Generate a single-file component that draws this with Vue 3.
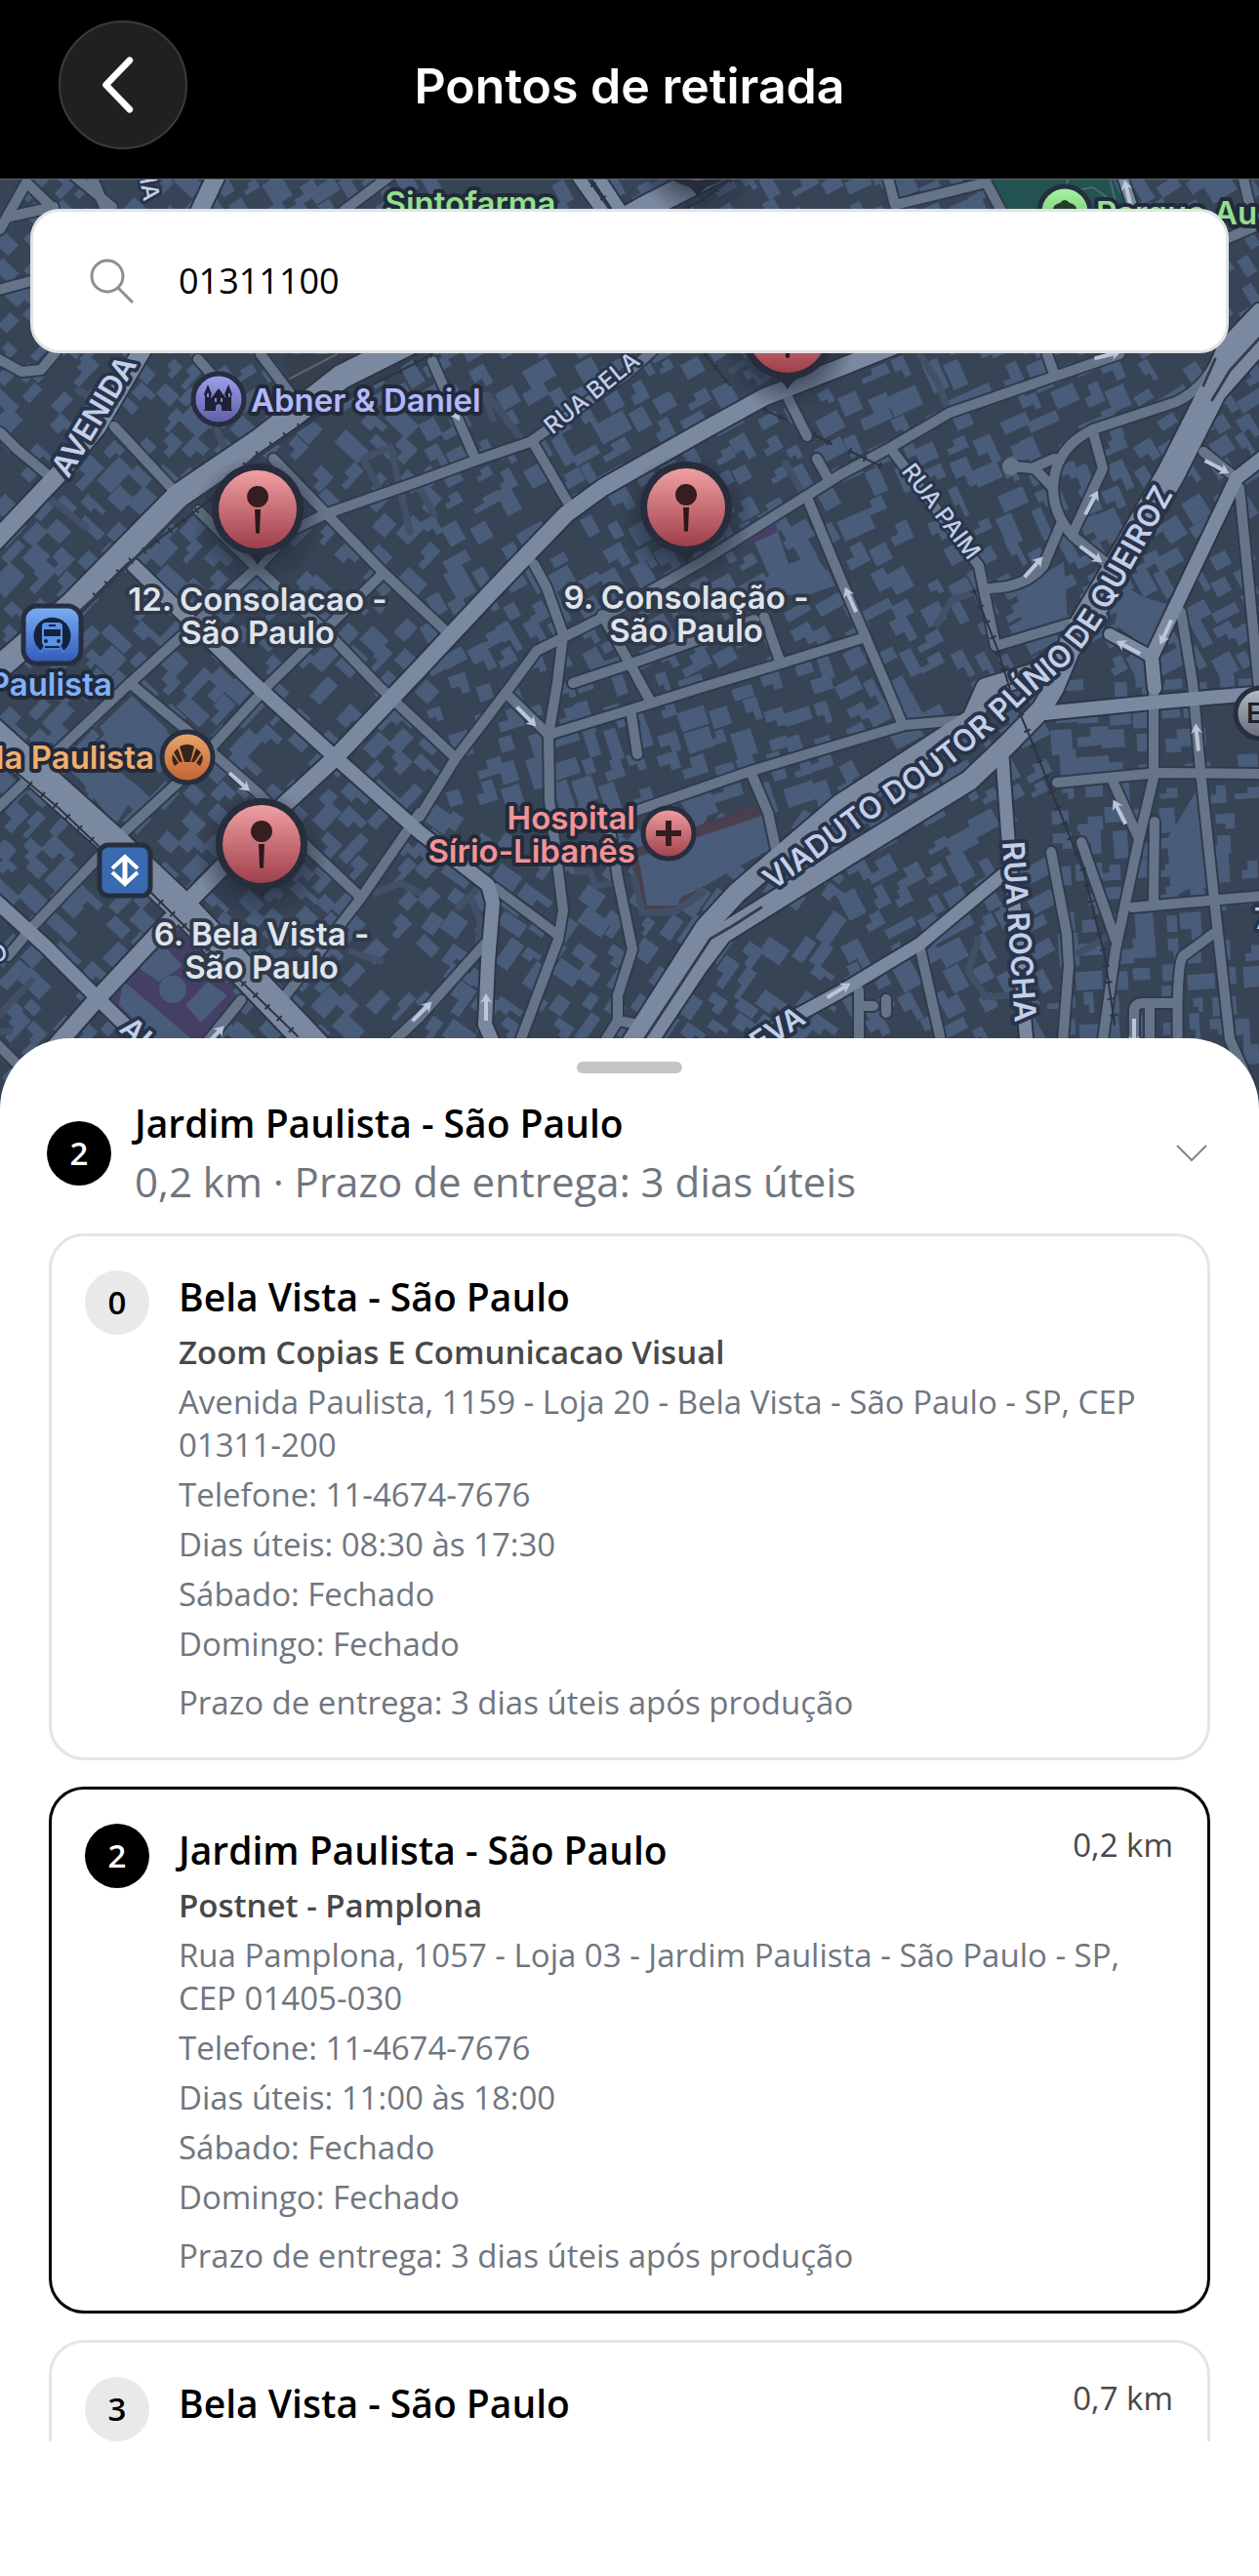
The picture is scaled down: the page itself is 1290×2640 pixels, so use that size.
<template>
  <main class="screen">
    <header class="topbar">
      <button class="back" type="button" aria-label="Voltar">
        <svg viewBox="0 0 132 132" aria-hidden="true">
          <path d="M73 40 L48 66 L73 92" />
        </svg>
      </button>
      <h1 class="topbar-title">Pontos de retirada</h1>
    </header>

    <section class="map" aria-label="Mapa">
      <svg class="map-canvas" viewBox="0 183 1290 960" preserveAspectRatio="xMidYMin slice">
        <defs>
          <linearGradient id="red" x1="0" y1="0" x2="0" y2="1">
            <stop offset="0" stop-color="#f0a0a2" />
            <stop offset="1" stop-color="#9f3f4b" />
          </linearGradient>
          <linearGradient id="violet" x1="0" y1="0" x2="0" y2="1">
            <stop offset="0" stop-color="#9ea3ea" />
            <stop offset="1" stop-color="#5d5ba6" />
          </linearGradient>
          <linearGradient id="orange" x1="0" y1="0" x2="0" y2="1">
            <stop offset="0" stop-color="#eaa76c" />
            <stop offset="1" stop-color="#c26030" />
          </linearGradient>
          <linearGradient id="blue" x1="0" y1="0" x2="0" y2="1">
            <stop offset="0" stop-color="#79b0f8" />
            <stop offset="1" stop-color="#3158b8" />
          </linearGradient>
          <linearGradient id="green" x1="0" y1="0" x2="0" y2="1">
            <stop offset="0" stop-color="#a9f5a4" />
            <stop offset="1" stop-color="#63b868" />
          </linearGradient>
          <linearGradient id="gray" x1="0" y1="0" x2="0" y2="1">
            <stop offset="0" stop-color="#b4bcc6" />
            <stop offset="1" stop-color="#646b76" />
          </linearGradient>
          <radialGradient id="glow">
            <stop offset="0.500" stop-color="#1f2635" stop-opacity="0.600" />
            <stop offset="1" stop-color="#1f2635" stop-opacity="0" />
          </radialGradient>
          <path id="viaduto" d="M792 913 L880 849 L960 795 Q1010 758 1057 711 Q1105 677 1131 633 L1230 457" />
        </defs>

        <rect y="183" width="1290" height="960" fill="#374455" />
        <path :d="buildings" class="building" />
        <path d="M290 363H430L400 384 330 428 300 400Z" fill="#363f4b" />
        <path d="M345 363 297 388" class="trail" />
        <path d="M1015 183H1140L1156 216H1030Z" fill="#225350" />
        <path d="M1090 195 1095 183M1102 195 1120 192 1134 202M1137 183 1144 210" class="trail" />
        <path d="M110 1025 187 948 245 1024 205 1068H148Z" fill="#453f66" />
        <path d="M126 1005 200 1068H160L122 1030ZM142 992 167 968 187 990 163 1006ZM190 1030 213 1006 233 1020 206 1048Z" class="building" />
        <circle cx="177" cy="1014" r="14" class="building" />
        <path d="M768 550 795 537 797 546 773 556ZM840 568 848 572 862 600 858 604Z" fill="#453f66" />
        <path d="M644 872 776 824 778 834 794 866 716 912 694 930 660 934Z" fill="#49404f" />
        <path d="M654 878 775 838 784 834 794 868 714 912 697 920 695 928 663 928Z" class="building" />
        <path d="M697 822 728 812 736 832 710 842ZM1040 605 1090 576 1094 638 1052 646Z" class="building" />
        <path d="M773 556 797 545 808 578 835 568 856 600 822 612 796 608Z" class="building" />
        <path d="M102 745 135 713 172 748 135 792ZM78 794 100 770 142 808 118 846Z" class="building" />
        <path d="M1150 600 1172 612 1212 624 1176 664 1142 640ZM1196 860 1232 800 1240 900 1200 920Z" class="building" />

        <path v-for="d in lanes" :key="d" :d="d" class="lane" />
        <path v-for="d in streets" :key="'c' + d" :d="d" class="street-case" />
        <path v-for="r in avenues" :key="'c' + r.d" :d="r.d" class="avenue-case" :stroke-width="r.w + 4" />
        <path v-for="d in streets" :key="d" :d="d" class="street" />
        <circle cx="1036" cy="478" r="9" fill="#667489" />
        <path v-for="r in avenues" :key="r.d" :d="r.d" class="avenue" :stroke-width="r.w" />
        <path v-for="d in rails" :key="d" :d="d" class="rail" />
        <path v-for="d in rails" :key="'t' + d" :d="d" class="rail-ties" />
        <path v-for="d in medians" :key="d" :d="d" class="median" />

        <g v-for="(a, i) in arrows" :key="i" class="arrow" :transform="arrowTransform(a)">
          <path d="M-14 -2H6L4 -6L14 0 4 6 6 2H-14Z" />
        </g>

        <!-- nomes de ruas -->
        <g class="road-name">
          <text class="road-big"><textPath href="#viaduto">VIADUTO DOUTOR PLÍNIO DE QUEIROZ</textPath></text>
          <text class="road-big" transform="translate(70 491) rotate(-59)">AVENIDA</text>
          <text class="road-big" transform="translate(1027 863) rotate(86)">RUA ROCHA</text>
          <text class="road-mid" transform="translate(777 1080) rotate(-33)">EVA</text>
          <text class="road-mid" transform="translate(121 1056) rotate(42)">AL</text>
          <text class="road-small" transform="translate(566 446) rotate(-39)">RUA BELA</text>
          <text class="road-small" transform="translate(923 483) rotate(53)">RUA PAIM</text>
          <text class="road-small" transform="translate(140 166) rotate(80)">HIA</text>
          <text class="road-small" transform="translate(-8 988) rotate(-20)">O</text>
          <text class="road-mid" x="1285" y="952">7</text>
        </g>

        <!-- pontos de interesse -->
        <g class="poi">
          <text x="482" y="220" text-anchor="middle" fill="#92df8d">Sintofarma</text>
          <text x="1123" y="230" fill="#92df8d">Parque Augusta</text>
          <text x="257" y="422" fill="#b3b8fb">Abner &amp; Daniel</text>
          <text x="115" y="713" text-anchor="end" fill="#7fb1fa">Paulista</text>
          <text x="158" y="788" text-anchor="end" fill="#f0ae70">la Paulista</text>
          <text x="651" y="850" text-anchor="end" fill="#f19396">Hospital</text>
          <text x="651" y="884" text-anchor="end" fill="#f19396">Sírio-Libanês</text>
        </g>

        <g class="badge-ring">
          <circle cx="1091" cy="217" r="26" fill="url(#green)" />
          <circle cx="224" cy="409" r="26" fill="url(#violet)" />
          <circle cx="192" cy="776" r="26" fill="url(#orange)" />
          <circle cx="685" cy="854" r="26" fill="url(#red)" />
          <circle cx="1292" cy="731" r="26" fill="url(#gray)" />
          <rect x="24" y="621" width="59" height="59" rx="14" fill="url(#blue)" />
          <rect x="102" y="866" width="52" height="52" rx="9" fill="#3a6bb0" />
        </g>

        <path d="M1078 217Q1079 209 1086 208 1091 202 1096 208 1103 209 1104 217Z" fill="#243d25" />
        <path
          d="M209 421V420H210V406L209 404 213 394 217 404 216 406V408L218 406 224 398 230 406 231 408V406L230 404 234 394 238 404 237 406V420H238V421H227V416Q224 412 221 416V421Z"
          fill="#1f2038"
        />
        <path d="M212 403h2v4h-2zM234 403h2v4h-2zM220 408h2v4h-2zM226 408h2v4h-2z" fill="#8084cc" />
        <path
          d="M184 765Q192 761 199 765L195 781H189ZM182 767 187 781 184 781 178 771ZM201 767 196 781 199 781 206 771ZM177 773 183 782 179 785Q175 779 177 773ZM207 773 201 782 205 785Q209 779 207 773Z"
          fill="#35241a"
        />
        <path d="M682 841h6v10h10v6h-10v10h-6v-10h-10v-6h10z" fill="#351d20" />
        <text x="1277" y="741" class="office">E</text>
        <g>
          <path d="M41 666A19 19 0 1 1 66 666Z" fill="#14233d" />
          <rect x="43" y="638" width="21" height="24" rx="4" fill="#5b92e6" />
          <path d="M45 645h17v7h-17zM50 640h7v2h-7z" fill="#14233d" />
          <circle cx="47" cy="657" r="2" fill="#14233d" />
          <circle cx="60" cy="657" r="2" fill="#14233d" />
          <path d="M46 661 42 669M61 661 65 669M45 665H62" stroke="#4c80da" stroke-width="2" />
        </g>
        <g fill="none" stroke="#fff">
          <path d="M115 890 128 878 141 890M115 894 128 906 141 894" stroke-width="4" />
          <path d="M128 878V906" stroke-width="5" />
        </g>

        <!-- pontos de retirada -->
        <g v-for="p in pins" :key="p.x + '-' + p.y" :transform="`translate(${p.x} ${p.y})`">
          <circle r="68" cy="12" fill="url(#glow)" />
          <path d="M-20 40 Q-6 46 0 57 Q6 46 20 40Z" fill="#252b3a" />
          <circle r="47" fill="#272d3c" />
          <circle r="40" fill="url(#red)" />
          <circle cy="-13" r="11" fill="#351d20" />
          <path d="M-3 0H3L2 24Q0 26 -2 24Z" fill="#2c181b" />
          <text v-for="(line, i) in p.lines" :key="line" class="pin-name" :y="104 + i * 34">{{ line }}</text>
        </g>
        <rect y="183" width="1290" height="1" fill="#5f6673" />
      </svg>

      <form class="search" role="search" @submit.prevent>
        <svg class="search-icon" viewBox="0 0 46 46" aria-hidden="true">
          <circle cx="18" cy="18" r="16" />
          <path d="M29 30 L44 45" />
        </svg>
        <input v-model="cep" type="text" inputmode="numeric" aria-label="CEP" />
      </form>
    </section>

    <section class="sheet">
      <div class="handle"></div>
      <button class="summary" type="button" @click="selected = 2">
        <span class="number active">2</span>
        <span class="summary-text">
          <span class="name">Jardim Paulista - São Paulo</span>
          <span class="summary-info">0,2 km · Prazo de entrega: 3 dias úteis</span>
        </span>
        <svg class="chevron" viewBox="0 0 32 18" aria-hidden="true">
          <path d="M1 1 L16 16 L31 1" />
        </svg>
      </button>

      <ul class="list">
        <li
          v-for="point in points"
          :key="point.id"
          class="card"
          :class="{ selected: point.id === selected }"
          @click="selected = point.id"
        >
          <span class="number" :class="{ active: point.id === selected }">{{ point.id }}</span>
          <div class="card-body">
            <div class="card-head">
              <h2 class="name">{{ point.name }}</h2>
              <span v-if="point.distance" class="distance">{{ point.distance }}</span>
            </div>
            <p v-if="point.store" class="store">{{ point.store }}</p>
            <p v-for="line in point.details" :key="line">{{ line }}</p>
            <p v-if="point.deadline" class="deadline">{{ point.deadline }}</p>
          </div>
        </li>
      </ul>
    </section>
  </main>
</template>

<script setup>
import { ref } from 'vue'

const cep = ref('01311100')
const selected = ref(2)

const points = [
  {
    id: 0,
    name: 'Bela Vista - São Paulo',
    store: 'Zoom Copias E Comunicacao Visual',
    details: [
      'Avenida Paulista, 1159 - Loja 20 - Bela Vista - São Paulo - SP, CEP 01311-200',
      'Telefone: 11-4674-7676',
      'Dias úteis: 08:30 às 17:30',
      'Sábado: Fechado',
      'Domingo: Fechado',
    ],
    deadline: 'Prazo de entrega: 3 dias úteis após produção',
  },
  {
    id: 2,
    name: 'Jardim Paulista - São Paulo',
    store: 'Postnet - Pamplona',
    distance: '0,2 km',
    details: [
      'Rua Pamplona, 1057 - Loja 03 - Jardim Paulista - São Paulo - SP, CEP 01405-030',
      'Telefone: 11-4674-7676',
      'Dias úteis: 11:00 às 18:00',
      'Sábado: Fechado',
      'Domingo: Fechado',
    ],
    deadline: 'Prazo de entrega: 3 dias úteis após produção',
  },
  { id: 3, name: 'Bela Vista - São Paulo', distance: '0,7 km' },
]

const pins = [
  { x: 264, y: 522, lines: ['12. Consolacao -', 'São Paulo'] },
  { x: 703, y: 520, lines: ['9. Consolação -', 'São Paulo'] },
  { x: 268, y: 865, lines: ['6. Bela Vista -', 'São Paulo'] },
  { x: 807, y: 342, lines: [] },
  { x: 715, y: 145, lines: [] },
]

// ruas principais, com largura
const avenues = [
  { w: 24, d: 'M-10 692 75 618 183 508 267 451 350 386 430 346 661 213 745 170' },
  { w: 18, d: 'M-10 560 60 486 100 437 145 360 206 213 224 175' },
  { w: 14, d: 'M137 580 260 700 340 773 430 853 500 907 505 925 500 985 497 1050 512 1085' },
  { w: 17, d: 'M50 1080 100 1023 187 930 293 823 343 777 430 685 503 607 580 527 617 500 723 440 783 407 860 377 940 345' },
  { w: 30, d: 'M-15 745 113 860 187 930 330 1080' },
  { w: 14, d: 'M-8 920 47 970 100 1023 150 1072' },
  { w: 28, d: 'M1300 335 1243 400 1200 485 1137 595 1100 657' },
  { w: 14, d: 'M1290 318 1255 355 1236 400' },
  { w: 20, d: 'M1100 657 1080 705 1067 727 1033 762 993 800 860 882 740 957 715 990 655 1080' },
  { w: 20, d: 'M1105 655 1060 690 1010 705 996 737 860 825 755 915 723 950 640 1080' },
  { w: 14, d: 'M1295 468 1267 490 1180 673 1183 705' },
  { w: 12, d: 'M1137 650 1180 673' },
  { w: 14, d: 'M1060 732 1180 720 1295 710' },
  { w: 13, d: 'M1027 775 1033 860 1053 1080' },
  { w: 13, d: 'M1027 897 943 967 860 1017 770 1066' },
  { w: 12, d: 'M588 175 617 216' },
  { w: 12, d: 'M609 175 636 216' },
  { w: 10, d: 'M1148 175 1162 216' },
]

const streets = [
  'M0 235 27 187 55 214M10 222 55 212M70 175 115 212M92 175 108 215',
  'M-5 366 22 381 42 379 57 361M-5 298 32 288',
  'M0 443 17 460 53 490M117 437 182 507M267 363 297 403M203 368 217 384',
  'M203 523 263 582 337 650 390 705 467 777M263 582 130 703 -5 830',
  'M280 470 333 525 393 587 457 647M393 587 277 700 190 795 117 862 33 950 8 980',
  'M263 582 300 543 333 527 430 493 487 472 543 453 640 385 668 360',
  'M443 370 487 470M547 455 583 517M807 407 827 447M837 470 850 493',
  'M133 700 190 747 267 815 317 870 370 920M430 833 370 920 285 1030M247 1025 213 1067',
  'M-5 1068 35 1108M395 1075 430 1042 497 967',
  'M430 837 467 777 522 705 550 667 623 630 720 575 860 487 910 460 973 423 1077 387 1147 363',
  'M547 578 560 602 577 650 571 700 562 753 563 820 577 933 572 963 530 1075',
  'M617 630 647 683 667 720M587 700 647 680 773 635M783 632 800 680',
  'M520 712 562 753 647 727 717 705 800 680 887 653M647 733 653 773',
  'M640 835 770 790 860 763 927 743 985 738M770 793 787 833 795 870',
  'M625 850 633 900 648 973 633 1020 633 1046 665 1052M633 1046 615 1075',
  'M507 910 570 957M827 510 860 590 907 700 925 743',
  'M1073 363 1080 383M913 460 1003 580 1020 662 1093 640 1130 633',
  'M1252 355 Q1240 395 1205 412 L1120 440Q1085 457 1080 490 T1100 550L1142 584',
  'M1120 443 1130 480 1100 545M1040 478 1057 480 1080 470M1060 480 1077 498M1010 603Q1050 603 1069 580L1088 535',
  'M1233 463 1263 487M1270 500 1290 705M1210 627 1222 700 1230 790 1245 930 1260 1065 1280 1110',
  'M1182 700 1182 797 1167 860 1143 973 1128 1080M1083 802 1187 792 1295 793M1140 800 1167 860',
  'M1183 842 1182 927M1160 930 1295 918M1243 957 1212 980Q1205 990 1207 1080M1162 1080V1036Q1162 1028 1172 1028H1203M1178 1030V1080',
  'M943 973 967 1080M880 1015V1080M884 1031H895M908 1024V1038M1077 873 1093 957 1095 990 1088 1080M1108 863 1143 963',
  'M908 175 917 210 1011 187M1004 175 1026 216M400 180 352 216M1272 175 1282 216M1256 245 1295 228',
]

const lanes = [
  'M80 400 110 415M50 510 88 540M222 440 233 465M372 470 400 458 420 545M372 470 388 500',
  'M430 500 445 527M500 405 532 447M497 405 505 430M942 363 960 390 972 420M960 640 975 615 1000 606',
  'M470 930 488 912M485 925 492 945 490 970M592 893 605 893 610 908 632 904M650 900 658 935 690 935 720 915',
  'M0 1057H10M32 1005 0 1040M385 915 410 905 430 915M360 975 390 985M1003 962 992 995 1010 1022 1035 1020',
  'M1105 977 1140 957M888 670V640M750 380 765 370 780 385M805 475 825 510',
]

const rails = [
  'M97 611 130 578 209 517 262 467 300 441 350 410 430 370 661 227 715 208 760 175',
  'M17 792 60 828 102 868M152 912 190 950 305 1062',
  'M722 363 748 395M783 420 805 430M833 445 852 455M870 462 903 478M998 605 1022 665 1036 710 1056 757 1110 892 1122 940 1132 980 1142 1050',
  'M597 175 628 216',
]

const medians = [
  'M80 628 117 594 190 520M205 510 275 460 420 368',
  'M1290 347 1260 380 1242 410M1245 368 1233 395',
  'M780 930 752 948 728 962 657 1070',
]

// cada seta: origem e destino
const arrows = [
  [1123, 367, 1147, 361],
  [1158, 208, 1153, 188],
  [1235, 472, 1259, 485],
  [1112, 527, 1125, 503],
  [1107, 560, 1129, 576],
  [1050, 591, 1068, 571],
  [877, 627, 866, 602],
  [1200, 636, 1189, 660],
  [1168, 670, 1144, 657],
  [235, 792, 256, 811],
  [530, 725, 549, 744],
  [498, 1046, 498, 1018],
  [424, 1045, 441, 1028],
  [1228, 769, 1225, 742],
  [1153, 844, 1141, 820],
  [848, 1022, 871, 1008],
  [1162, 1044, 1162, 1072],
  [212, 1070, 228, 1053],
  [458, 408, 470, 430],
]

function arrowTransform([x1, y1, x2, y2]) {
  const angle = Math.round((Math.atan2(y2 - y1, x2 - x1) * 180) / Math.PI)
  return `translate(${(x1 + x2) / 2} ${(y1 + y2) / 2}) rotate(${angle})`
}

// orientação das quadras por região
function blockAngle(x, y) {
  if (x < 440) return y < 430 && x > 200 ? 58 : 43
  if (x < 860) return y < 680 ? 61 : y < 820 ? 72 : 35
  if (y < 560) return x < 1150 ? 66 : 58
  if (y < 700) return 62
  return x > 1070 ? 86 : 62
}

function makeBuildings() {
  let seed = 77
  const rand = () => {
    seed = (seed * 16807) % 2147483647
    return seed / 2147483647
  }
  let d = ''
  for (let y = 186; y < 1140; y += 27) {
    for (let x = 4; x < 1290; x += 27) {
      const skip = rand()
      const cx = x + rand() * 12
      const cy = y + rand() * 12
      const w = 7 + rand() * 10
      const h = 5 + rand() * 6
      const cut = rand()
      if (skip < 0.16) continue
      const a = ((blockAngle(cx, cy) + (cut > 0.5 ? 90 : 0)) * Math.PI) / 180
      // parte das construções tem planta em L
      const shape =
        cut > 0.3 && cut < 0.7
          ? [[-w, -h], [w, -h], [w, 0], [2, 0], [2, h], [-w, h]]
          : [[-w, -h], [w, -h], [w, h], [-w, h]]
      const pts = shape.map(([px, py]) => {
        const rx = cx + px * Math.cos(a) - py * Math.sin(a)
        const ry = cy + px * Math.sin(a) + py * Math.cos(a)
        return `${rx.toFixed(1)} ${ry.toFixed(1)}`
      })
      d += `M${pts.join('L')}Z`
    }
  }
  return d
}

const buildings = makeBuildings()
</script>

<style>
body {
  margin: 0;
  background: #fff;
}
</style>

<style scoped>
.screen {
  font-family: "Open Sans", "Noto Sans", sans-serif;
  color: #000;
}

.topbar {
  display: grid;
  grid-template-columns: 132px 1fr 132px;
  align-items: center;
  padding: 21px 60px 30px;
  background: #000;
}

.back {
  width: 132px;
  height: 132px;
  padding: 0;
  border: 2px solid #3a3b3d;
  border-radius: 50%;
  background: #1f2021;
  cursor: pointer;
}

.back svg {
  display: block;
  width: 100%;
  fill: none;
  stroke: #fff;
  stroke-width: 7;
  stroke-linecap: round;
  stroke-linejoin: round;
}

.topbar-title {
  margin: 0;
  padding-top: 2px;
  text-align: center;
  color: #fff;
  font-family: Inter, sans-serif;
  font-size: 50px;
  font-weight: 600;
  line-height: 60px;
}

/* mapa */
.map {
  position: relative;
}

.map-canvas {
  display: block;
  width: 100%;
  font-family: Inter, sans-serif;
}

.building { fill: #495c7a; }

.lane,
.street,
.street-case,
.avenue,
.avenue-case,
.trail,
.rail,
.rail-ties,
.median {
  fill: none;
  stroke-linejoin: round;
  stroke-linecap: round;
}

.lane { stroke: #415066; stroke-width: 7; }
.street { stroke: #667489; stroke-width: 10; }
.street-case { stroke: #2f3b4c; stroke-width: 14; }
.avenue { stroke: #7b89a0; }
.avenue-case { stroke: #2b3646; }
.trail { stroke: #55666f; stroke-width: 2; }
.rail { stroke: #2c3442; stroke-width: 2; }
.rail-ties { stroke: #2c3442; stroke-width: 7; stroke-linecap: butt; stroke-dasharray: 2 15; }
.median { stroke: #323d4e; stroke-width: 3; }
.arrow { fill: #bcc5d9; }

.road-name text {
  fill: #c3cfe9;
  stroke: #27344a;
  stroke-width: 8px;
  stroke-linejoin: round;
  paint-order: stroke;
}

.road-name .road-big { font-size: 31px; font-weight: 600; }
.road-name .road-mid { font-size: 30px; font-weight: 600; }
.road-name .road-small { font-size: 24px; font-weight: 500; stroke-width: 6px; }

.poi text,
.pin-name {
  font-size: 33px;
  font-weight: 600;
  stroke: #222a3a;
  stroke-width: 8px;
  stroke-linejoin: round;
  paint-order: stroke;
}

.pin-name {
  fill: #dfe4ec;
  stroke: #2f3949;
  text-anchor: middle;
}

.badge-ring > * {
  stroke: #272e3f;
  stroke-width: 5px;
}

.office {
  font-size: 28px;
  font-weight: 600;
  fill: #1d2129;
}

.search {
  position: absolute;
  top: 31px;
  left: 31px;
  right: 31px;
  display: flex;
  align-items: center;
  gap: 45px;
  box-sizing: border-box;
  height: 148px;
  padding: 0 58px;
  border: 3px solid #e2e3e4;
  border-radius: 30px;
  background: #fff;
}

.search-icon {
  flex: none;
  width: 46px;
  fill: none;
  stroke: #8e8e8e;
  stroke-width: 3;
}

.search input {
  flex: 1;
  min-width: 0;
  padding: 0;
  border: 0;
  outline: 0;
  background: none;
  color: #000;
  font-family: inherit;
  font-size: 36px;
  line-height: 48px;
}

/* painel inferior */
.sheet {
  position: relative;
  margin-top: -79px;
  padding: 24px 0 36px;
  border-radius: 72px 72px 0 0;
  background: #fff;
  box-shadow: 0 15px 30px rgba(0, 0, 0, 0.08);
}

.handle {
  width: 108px;
  height: 12px;
  margin: 0 auto 24px;
  border-radius: 6px;
  background: #c4c4c4;
}

.summary {
  display: flex;
  align-items: center;
  gap: 24px;
  width: 100%;
  margin-bottom: 25px;
  padding: 0 53px 0 48px;
  border: 0;
  background: none;
  color: inherit;
  font-family: inherit;
  text-align: left;
  cursor: pointer;
}

.summary-text {
  display: flex;
  flex: 1;
  flex-direction: column;
  gap: 4px;
}

.summary-info {
  color: #6f767f;
  font-size: 42px;
  line-height: 57px;
}

.chevron {
  flex: none;
  width: 32px;
  fill: none;
  stroke: #858585;
  stroke-width: 2;
}

.number {
  display: flex;
  flex: none;
  align-items: center;
  justify-content: center;
  width: 66px;
  height: 66px;
  border-radius: 50%;
  background: #e9e9e9;
  font-size: 33px;
  font-weight: 600;
  line-height: 44px;
}

.number.active {
  background: #000;
  color: #fff;
}

.name {
  margin: 0;
  font-size: 39px;
  font-weight: 600;
  line-height: 54px;
}

.list {
  display: flex;
  flex-direction: column;
  gap: 27px;
  max-height: 1238px;
  margin: 0;
  padding: 0 50px;
  overflow-y: auto;
  scrollbar-width: none;
  list-style: none;
}

.card {
  display: flex;
  flex: none;
  align-items: flex-start;
  gap: 30px;
  box-sizing: border-box;
  min-height: 540px;
  padding: 35px 35px 34px 34px;
  border: 3px solid #e5e5e5;
  border-radius: 36px;
  cursor: pointer;
}

.card.selected {
  border-color: #000;
}

.card-body {
  display: flex;
  flex: 1;
  flex-direction: column;
  gap: 7px;
  color: #6f767f;
  font-size: 33px;
  line-height: 44px;
}

.card-head {
  display: flex;
  align-items: flex-start;
  justify-content: space-between;
}

.card-head .name {
  color: #000;
}

.card-body p {
  margin: 0;
}

.card-body .store {
  color: #484848;
  font-weight: 600;
  line-height: 45px;
}

.card-body .deadline {
  margin-top: 9px;
}

.distance {
  color: #484848;
}
</style>
